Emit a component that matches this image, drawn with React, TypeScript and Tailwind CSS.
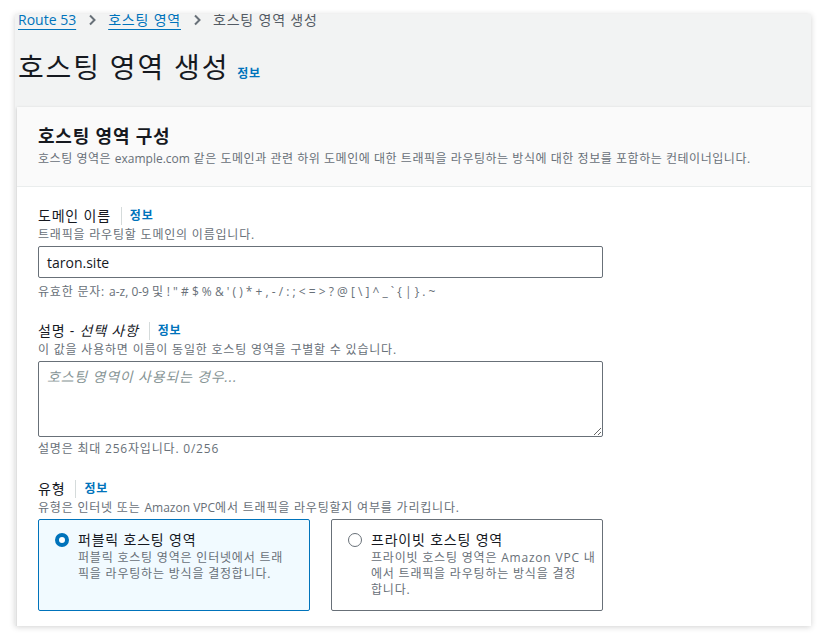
import { ReactNode } from "react"

function Chevron() {
  return (
    <svg width="10" height="12" viewBox="0 0 10 12" className="mx-[11px] shrink-0">
      <path d="M3 1.5 L7.5 6 L3 10.5" fill="none" stroke="#687078" strokeWidth="2" />
    </svg>
  )
}

function InfoLink() {
  return <span className="text-[12px] font-bold text-[#0073bb] leading-[20px]">정보</span>
}

function Sep() {
  return <span className="ml-[10px] mr-[8px] h-[18px] w-px bg-[#d5dbdb]" />
}

function Label({ children }: { children: ReactNode }) {
  return (
    <div className="flex items-center h-[20px]">
      <span className="text-[14px] leading-[20px] text-[#16191f]">{children}</span>
      <Sep />
      <InfoLink />
    </div>
  )
}

function Desc({ children, className = "" }: { children: ReactNode; className?: string }) {
  return <p className={`text-[12px] leading-[16px] text-[#687078] ${className}`}>{children}</p>
}

function RadioTile({
  checked,
  title,
  lines,
}: {
  checked: boolean
  title: string
  lines: string[]
}) {
  return (
    <div
      className={
        checked
          ? "h-[92px] rounded-[2px] border border-[#0073bb] bg-[#f1faff] pl-[16px] pr-[17px] pt-[10px]"
          : "h-[92px] rounded-[2px] border border-[#687078] bg-white pl-[16px] pr-[17px] pt-[10px]"
      }
    >
      <div className="flex">
        <div className="h-[20px] flex items-center">
          {checked ? (
            <span className="block w-[14px] h-[14px] rounded-full border-[4px] border-[#0073bb] bg-white" />
          ) : (
            <span className="block w-[14px] h-[14px] rounded-full border-[1.5px] border-[#687078] bg-white" />
          )}
        </div>
        <div className="ml-[9px]">
          <div className="text-[14px] leading-[20px] text-[#16191f]">{title}</div>
          {lines.map((l) => (
            <Desc key={l} className="whitespace-nowrap">
              {l}
            </Desc>
          ))}
        </div>
      </div>
    </div>
  )
}

export default function App() {
  return (
    <div className="min-h-screen bg-white pt-[14px] pl-[15px] tracking-[0.05em] font-['Open_Sans','Noto_Sans_CJK_KR',sans-serif]">
      <div className="w-[796px] h-[612px] overflow-hidden bg-[#f2f3f3] shadow-[0_1px_6px_rgba(0,0,0,0.18)]">
        {/* breadcrumbs */}
        <div className="flex items-center mt-[-4px] pl-[3px] text-[14px] leading-[20px]">
          <span className="tracking-normal text-[#0073bb] underline underline-offset-[4px] decoration-[#0073bb]">Route 53</span>
          <Chevron />
          <span className="text-[#0073bb] underline underline-offset-[4px] decoration-[#0073bb]">호스팅 영역</span>
          <Chevron />
          <span className="text-[#545b64]">호스팅 영역 생성</span>
        </div>

        {/* page title */}
        <div className="flex items-baseline h-[40px] mt-[17px] pl-[3px]">
          <h1 className="text-[28px] leading-[40px] tracking-[0.065em] text-[#16191f]">호스팅 영역 생성</h1>
          <span className="ml-[8px] text-[12px] font-bold text-[#0073bb]">정보</span>
        </div>

        {/* card */}
        <div className="mt-[20px] ml-[2px] h-[520px] bg-white shadow-[0_1px_3px_rgba(0,0,0,0.2)]">
          <div className="bg-[#fafafa] border-b border-[#eaeded] pl-[21px] pt-[16px] pb-[19px]">
            <h2 className="text-[18px] leading-[26px] font-bold text-[#16191f]">호스팅 영역 구성</h2>
            <Desc className="mt-[2px] tracking-[0.045em]">
              호스팅 영역은 <span className="tracking-normal">example.com</span> 같은 도메인과 관련 하위 도메인에 대한 트래픽을 라우팅하는 방식에 대한 정보를 포함하는 컨테이너입니다.
            </Desc>
          </div>

          <div className="pl-[21px] pt-[19px] w-[586px]">
            {/* domain name */}
            <Label>도메인 이름</Label>
            <Desc className="mt-[1px]">트래픽을 라우팅할 도메인의 이름입니다.</Desc>
            <div className="mt-[3px] h-[32px] rounded-[2px] border border-[#687078] flex items-center pl-[8px] text-[14px] tracking-normal text-[#16191f]">
              taron.site
            </div>
            <Desc className="mt-[6px]">
              유효한 문자:{" "}
              <span className="tracking-normal">
                a-z, 0-9 <span className="tracking-[0.05em]">및</span> ! " # $ % &amp; ' ( ) * + , - / : ; &lt; = &gt; ? @ [ \ ] ^ _ ` {"{"} | {"}"} . ~
              </span>
            </Desc>

            {/* description */}
            <div className="mt-[21px] flex items-center h-[20px]">
              <span className="text-[14px] leading-[20px] text-[#16191f]">
                설명 - <i>선택 사항</i>
              </span>
              <Sep />
              <InfoLink />
            </div>
            <Desc className="mt-[1px]">이 값을 사용하면 이름이 동일한 호스팅 영역을 구별할 수 있습니다.</Desc>
            <textarea
              className="mt-[3px] block w-full h-[76px] rounded-[2px] border border-[#687078] px-[8px] pt-[5px] text-[14px] leading-[20px] text-[#16191f] placeholder:italic placeholder:text-[#879596] outline-none"
              placeholder="호스팅 영역이 사용되는 경우..."
            />
            <Desc className="mt-[4px]">설명은 최대 256자입니다. 0/256</Desc>

            {/* type */}
            <div className="mt-[22px]">
              <Label>유형</Label>
            </div>
            <Desc className="mt-[1px]">
              유형은 인터넷 또는 <span className="tracking-normal">Amazon VPC</span>에서 트래픽을 라우팅할지 여부를 가리킵니다.
            </Desc>
            <div className="mt-[3px] grid grid-cols-2 gap-[21px]">
              <RadioTile
                checked
                title="퍼블릭 호스팅 영역"
                lines={["퍼블릭 호스팅 영역은 인터넷에서 트래", "픽을 라우팅하는 방식을 결정합니다."]}
              />
              <RadioTile
                checked={false}
                title="프라이빗 호스팅 영역"
                lines={["프라이빗 호스팅 영역은 Amazon VPC 내", "에서 트래픽을 라우팅하는 방식을 결정", "합니다."]}
              />
            </div>
          </div>
        </div>
      </div>
    </div>
  )
}
